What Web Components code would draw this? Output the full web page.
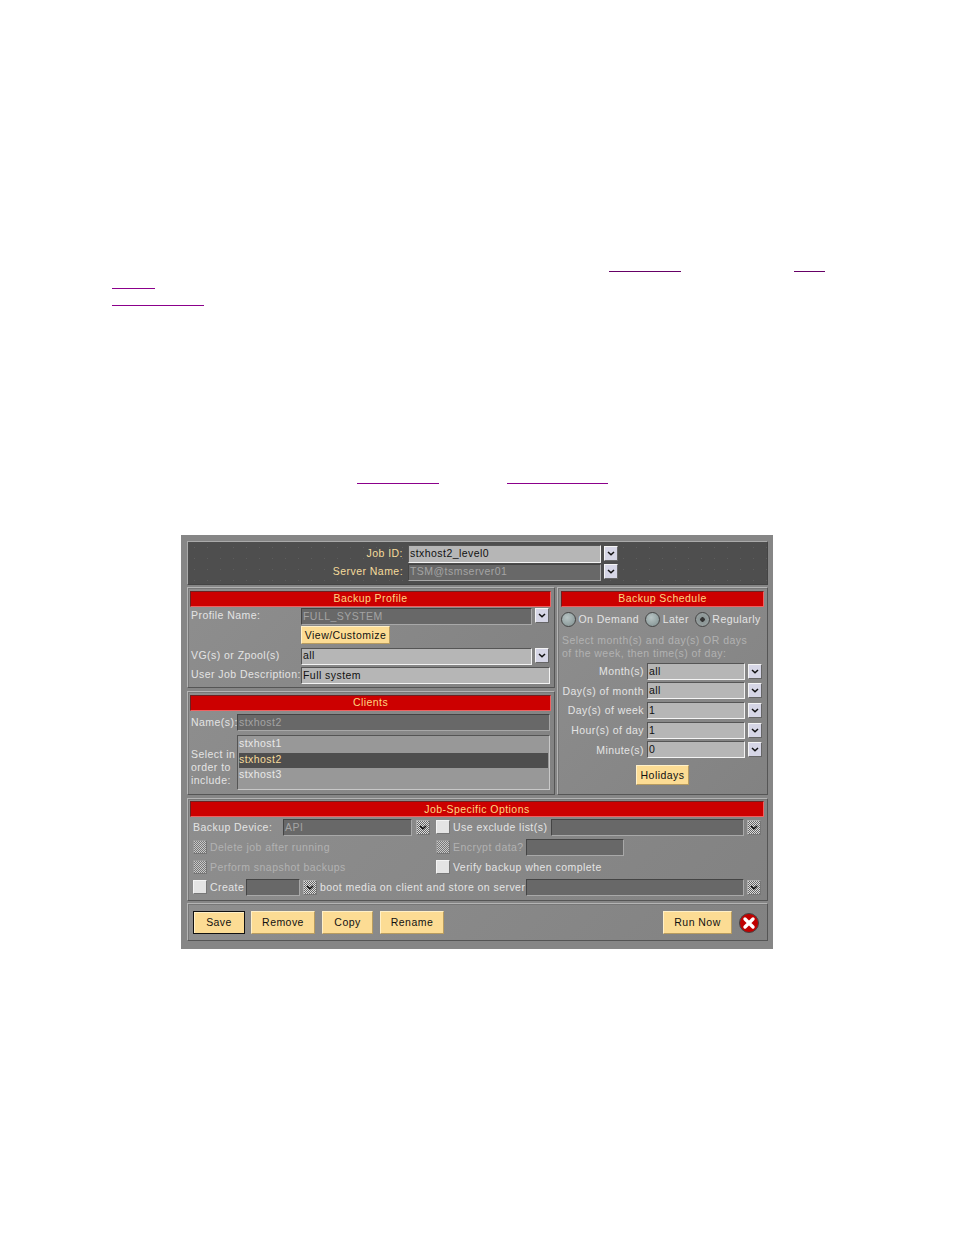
<!DOCTYPE html>
<html>
<head>
<meta charset="utf-8">
<style>
  html, body { margin: 0; background: #fff; }
  body { font: 10.5px "Liberation Sans", Arial, sans-serif; letter-spacing: .45px; }
  .l { color: #e4e4e4; white-space: nowrap; }
  .c { color: #f6dc9c; white-space: nowrap; }
  .off { color: #b2b2b2; white-space: nowrap; }
  .r { text-align: right; }
  .form { display: grid; grid-template-columns: 111px 231px 3px 14px; align-items: start; }
  .form > .l { line-height: 15px; padding-left: 1px; }
  .top { display: grid; grid-template-columns: 217px 193px 14px; column-gap: 3px; row-gap: 1px; align-items: start; }
  .top > .c { line-height: 16px; padding-right: 2px; }
  .top > .c.low { line-height: 14px; }
  .sched { display: grid; grid-template-columns: 83px 98px 14px; column-gap: 3px; row-gap: 2.7px; align-items: center; }
  .opt { display: grid; grid-template-columns: 243px 1fr; grid-auto-rows: 20px; align-items: center; padding-left: 3px; }
  .row { display: flex; align-items: center; height: 20px; }
  .full { grid-column: 1 / 3; }
  .bar x-btn { padding-bottom: 1px; }
</style>
</head>
<body>
<x-page>
  <x-links style="--pad:255px">
    <x-link-row><x-gap w="609"></x-gap><x-link w="72" tone="#660066"></x-link><x-gap w="113"></x-gap><x-link w="31" tone="#660066"></x-link></x-link-row>
    <x-link-row><x-gap w="112"></x-gap><x-link w="43"></x-link></x-link-row>
    <x-link-row><x-gap w="112"></x-gap><x-link w="92"></x-link></x-link-row>
  </x-links>
  <x-links style="--pad:161px">
    <x-link-row><x-gap w="357"></x-gap><x-link w="82"></x-link><x-gap w="68"></x-gap><x-link w="101"></x-link></x-link-row>
  </x-links>
  <x-dialog>
    <x-panel slot="top" dark style="height:44px;padding:3px 0 0 0">
      <div class="top">
        <span class="c r">Job ID:</span><x-field w="193" h="18">stxhost2_level0</x-field><x-drop style="margin-top:1px"></x-drop>
        <span class="c r low">Server Name:</span><x-field w="193" h="17" lh="12" off>TSM@tsmserver01</x-field><x-drop></x-drop>
      </div>
    </x-panel>
    <x-panel slot="left" style="height:101px">
      <x-title>Backup Profile</x-title>
      <div class="form" style="grid-template-rows:17px 23px 19px 20px;margin-top:1px">
        <span class="l">Profile Name:</span><x-field w="231" h="17" off>FULL_SYSTEM</x-field><span></span><x-drop></x-drop>
        <span></span><div style="padding-top:1px"><x-btn w="89" h="18">View/Customize</x-btn></div><span></span><span></span>
        <span class="l">VG(s) or Zpool(s)</span><x-field w="231" h="17" lh="12">all</x-field><span></span><x-drop></x-drop>
        <span class="l">User Job Description:</span><x-field w="249" h="17" style="grid-column:2/5">Full system</x-field>
      </div>
    </x-panel>
    <x-panel slot="left" style="height:104px">
      <x-title>Clients</x-title>
      <div style="display:grid;grid-template-columns:47px 313px;column-gap:0;row-gap:4px;margin-top:3px;align-items:center">
        <span class="l" style="padding-left:1px;line-height:15px">Name(s):</span><x-field w="313" h="17" off>stxhost2</x-field>
        <span class="l" style="padding-left:1px;line-height:13px;align-self:end;padding-bottom:3px">Select in<br>order to<br>include:</span>
        <x-list><x-item>stxhost1</x-item><x-item selected>stxhost2</x-item><x-item>stxhost3</x-item></x-list>
      </div>
    </x-panel>
    <x-panel slot="right" style="height:208px">
      <x-title>Backup Schedule</x-title>
      <div class="row" style="margin-top:2px;height:20px">
        <x-radio>On Demand</x-radio><x-radio style="margin-left:6px">Later</x-radio><x-radio checked style="margin-left:6px">Regularly</x-radio>
      </div>
      <div class="off" style="line-height:13px;margin:5px 0 2.6px 1px">Select month(s) and day(s) OR days<br>of the week, then time(s) of day:</div>
      <div class="sched">
        <span class="l r">Month(s)</span><x-field w="98" h="17">all</x-field><x-drop></x-drop>
        <span class="l r">Day(s) of month</span><x-field w="98" h="17">all</x-field><x-drop></x-drop>
        <span class="l r">Day(s) of week</span><x-field w="98" h="17">1</x-field><x-drop></x-drop>
        <span class="l r">Hour(s) of day</span><x-field w="98" h="17">1</x-field><x-drop></x-drop>
        <span class="l r">Minute(s)</span><x-field w="98" h="17">0</x-field><x-drop></x-drop>
      </div>
      <div style="display:flex;justify-content:center;margin:6.4px 0 0 0"><x-btn w="53" h="20">Holidays</x-btn></div>
    </x-panel>
    <x-panel slot="wide" style="height:103px;padding-top:2px">
      <x-title style="line-height:14px">Job-Specific Options</x-title>
      <div class="opt">
        <div class="row"><span class="l" style="width:90px">Backup Device:</span><x-field w="129" h="17" off>API</x-field><x-drop off style="margin-left:4px"></x-drop></div>
        <div class="row"><x-check></x-check><span class="l" style="width:98px;margin-left:3px">Use exclude list(s)</span><x-field w="193" h="17" off></x-field><x-drop off style="margin-left:3px"></x-drop></div>
        <div class="row"><x-check off></x-check><span class="off" style="margin-left:3px">Delete job after running</span></div>
        <div class="row"><x-check off></x-check><span class="off" style="width:73px;margin-left:3px">Encrypt data?</span><x-field w="98" h="17" off></x-field></div>
        <div class="row"><x-check off></x-check><span class="off" style="margin-left:3px">Perform snapshot backups</span></div>
        <div class="row"><x-check></x-check><span class="l" style="margin-left:3px">Verify backup when complete</span></div>
        <div class="row full"><x-check></x-check><span class="l" style="width:36px;margin-left:3px">Create</span><x-field w="54" h="17" off></x-field><x-drop off style="margin:0 3px"></x-drop><span class="l" style="width:206px">boot media on client and store on server</span><x-field w="218" h="17" off></x-field><x-drop off style="margin-left:3px"></x-drop></div>
      </div>
    </x-panel>
    <x-panel slot="wide" style="height:38px">
      <div class="row bar" style="height:23px;padding:4px 2px 0 3px;gap:6px">
        <x-btn w="52" h="23" def>Save</x-btn><x-btn w="64" h="23">Remove</x-btn><x-btn w="51" h="23" style="margin-left:1px">Copy</x-btn><x-btn w="64" h="23" style="margin-left:1px">Rename</x-btn>
        <x-btn w="69" h="23" style="margin-left:auto">Run Now</x-btn>
        <svg width="20" height="20" viewBox="0 0 20 20" style="margin:0 3px 0 1px"><circle cx="10" cy="10" r="9.5" fill="#c00000" stroke="#444" stroke-width="1"/><path d="M6 6 L14 14 M14 6 L6 14" stroke="#fff" stroke-width="3.4" stroke-linecap="round"/></svg>
      </div>
    </x-panel>
  </x-dialog>
</x-page>
<script>
// Small helper: every element gets an open shadow root built from one string.
class Base extends HTMLElement {
  constructor() {
    super();
    this.attachShadow({ mode: 'open' });
    this.shadowRoot.innerHTML = this.markup();
  }
  markup() { return '<slot></slot>'; }
}

class XPage extends Base {
  markup() { return `<style>:host{display:block;width:954px;height:1235px;overflow:hidden}</style><slot></slot>`; }
}
class XLinks extends Base {
  markup() { return `<style>:host{display:block;padding-top:var(--pad)}</style><slot></slot>`; }
}
class XLinkRow extends Base {
  markup() { return `<style>:host{display:flex;height:17px;align-items:flex-end}</style><slot></slot>`; }
}
class XGap extends Base {
  connectedCallback() { this.style.cssText = `display:block;width:${this.getAttribute('w')}px`; }
}
class XLink extends Base {
  markup() { return `<style>:host{display:block;height:1px;background:#8b008b}</style>`; }
  connectedCallback() {
    this.style.width = this.getAttribute('w') + 'px';
    if (this.hasAttribute('tone')) this.style.background = this.getAttribute('tone');
  }
}
class XDialog extends Base {
  markup() {
    return `<style>
      :host{display:block;box-sizing:border-box;width:592px;height:414px;margin:51px 0 0 181px;padding:6px 5px 8px 6px;background:#868686}
      .cols{display:grid;grid-template-columns:368px 211px;column-gap:2px;margin:2px 0 3px}
      .stack{display:flex;flex-direction:column;gap:3px}
      .wide{display:flex;flex-direction:column;gap:2px}
    </style>
    <slot name="top"></slot>
    <div class="cols"><div class="stack"><slot name="left"></slot></div><slot name="right"></slot></div>
    <div class="wide"><slot name="wide"></slot></div>`;
  }
}
class XPanel extends Base {
  markup() {
    return `<style>
      :host{display:block;box-sizing:border-box;padding:3px;background:linear-gradient(135deg,#8e8e8e,#828282);
        border:1px solid;border-color:#b4b4b4 #555 #555 #b4b4b4;box-shadow:inset 1px 1px 0 #777}
      :host([slot=left]),:host([slot=wide]){padding-left:2px}
      :host([dark]){background:#4e4e4e radial-gradient(#5e5e5e 0.5px,transparent 0.6px) 0 0/13px 11px;border-color:#aaa #444 #444 #aaa;box-shadow:none}
    </style><slot></slot>`;
  }
}
class XTitle extends Base {
  markup() {
    return `<style>
      :host{display:block;box-sizing:border-box;height:16px;line-height:12px;text-align:center;background:#cc0000;color:#ffd680;
        border:1px solid;border-color:#6e2020 #f06060 #f06060 #6e2020;white-space:nowrap}
    </style><slot></slot>`;
  }
}
class XField extends Base {
  markup() {
    return `<style>
      :host{display:block;box-sizing:border-box;padding-left:1px;background:#b6b6b6;color:#111;white-space:nowrap;overflow:hidden;
        border:1px solid;border-color:#555 #f4f4f4 #f4f4f4 #555}
      :host([off]){background:#686868;color:#a4a4a4;border-color:#444 #a8a8a8 #a8a8a8 #444}
    </style><slot></slot>`;
  }
  connectedCallback() {
    const h = this.getAttribute('h');
    this.style.width = this.getAttribute('w') + 'px';
    this.style.height = h + 'px';
    this.style.lineHeight = (this.getAttribute('lh') || h - 3) + 'px';
  }
}
class XDrop extends Base {
  markup() {
    return `<style>
      :host{display:flex;flex:none;box-sizing:border-box;width:14px;height:15px;align-items:center;justify-content:center;background:#d6d6e6;
        border:1px solid;border-color:#f4f4f4 #666 #666 #f4f4f4}
      :host([off]){background:repeating-conic-gradient(#666 0 25%,#ddd 0 50%) 0 0/2px 2px;border-color:#aaa #777 #777 #aaa}
      svg{display:block}
    </style><svg width="8" height="5" viewBox="0 0 8 5"><path d="M1 1 L4 3.8 L7 1" fill="none" stroke="#111" stroke-width="1.5"/></svg>`;
  }
}
class XBtn extends Base {
  markup() {
    return `<style>
      :host{display:inline-flex;box-sizing:border-box;align-items:center;justify-content:center;flex:none;background:#fcdc94;color:#111;white-space:nowrap;
        border:1px solid;border-color:#fff0c8 #b89c60 #b89c60 #fff0c8}
      :host([def]){border-color:#111;box-shadow:inset 1px 1px 0 #fff0c8}
    </style><slot></slot>`;
  }
  connectedCallback() {
    this.style.width = this.getAttribute('w') + 'px';
    this.style.height = this.getAttribute('h') + 'px';
  }
}
class XCheck extends Base {
  markup() {
    return `<style>
      :host{display:block;flex:none;box-sizing:border-box;width:14px;height:14px;background:#e4e4e4;
        border:1px solid;border-color:#f4f4f4 #777 #777 #f4f4f4}
      :host([off]){background:repeating-conic-gradient(#777 0 25%,#c8c8c8 0 50%) 0 0/2px 2px;border-color:#999 #777 #777 #999}
    </style>`;
  }
}
class XRadio extends Base {
  markup() {
    return `<style>
      :host{display:inline-flex;align-items:center;gap:2.5px;color:#e4e4e4;white-space:nowrap}
      i{display:block;box-sizing:border-box;width:15px;height:15px;border-radius:50%;border:1px solid #444;
        background:radial-gradient(circle at 40% 35%,#b8c4c4,#7e8e8e)}
      :host([checked]) i{background:radial-gradient(circle,#333 0 2px,#8a9494 2.5px,#a0a8a8)}
    </style><i></i><slot></slot>`;
  }
}
class XList extends Base {
  markup() {
    return `<style>
      :host{display:block;box-sizing:border-box;width:313px;height:55px;padding:1px;background:#989898;
        border:1px solid;border-color:#555 #c8c8c8 #c8c8c8 #555}
    </style><slot></slot>`;
  }
}
class XItem extends Base {
  markup() {
    return `<style>
      :host{display:block;height:15.5px;line-height:12px;color:#e8e8e8;white-space:nowrap}
      :host([selected]){background:#4e4e4e;color:#f6dc9c}
    </style><slot></slot>`;
  }
}

customElements.define('x-page', XPage);
customElements.define('x-links', XLinks);
customElements.define('x-link-row', XLinkRow);
customElements.define('x-gap', XGap);
customElements.define('x-link', XLink);
customElements.define('x-dialog', XDialog);
customElements.define('x-panel', XPanel);
customElements.define('x-title', XTitle);
customElements.define('x-field', XField);
customElements.define('x-drop', XDrop);
customElements.define('x-btn', XBtn);
customElements.define('x-check', XCheck);
customElements.define('x-radio', XRadio);
customElements.define('x-list', XList);
customElements.define('x-item', XItem);
</script>
</body>
</html>
